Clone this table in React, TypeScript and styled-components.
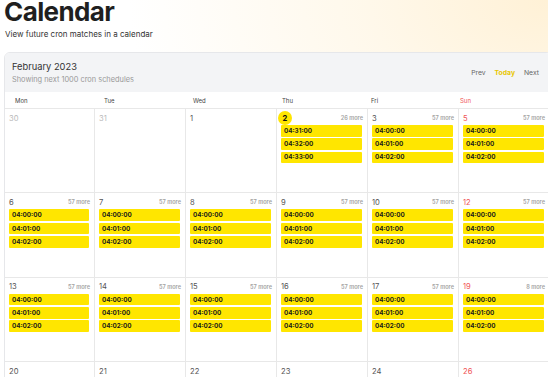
import { FC } from 'react';
import { styled, createGlobalStyle } from 'styled-components';

type CalEvent = string;

type Day = {
  day: number;
  muted?: boolean;
  sunday?: boolean;
  today?: boolean;
  more?: number;
  events?: CalEvent[];
};

const STD = ['04:00:00', '04:01:00', '04:02:00'];

const WEEKDAYS = ['Mon', 'Tue', 'Wed', 'Thu', 'Fri', 'Sun'];

const WEEKS: Day[][] = [
  [
    { day: 30, muted: true },
    { day: 31, muted: true },
    { day: 1 },
    { day: 2, today: true, more: 26, events: ['04:31:00', '04:32:00', '04:33:00'] },
    { day: 3, more: 57, events: STD },
    { day: 5, sunday: true, more: 57, events: STD },
  ],
  [
    { day: 6, more: 57, events: STD },
    { day: 7, more: 57, events: STD },
    { day: 8, more: 57, events: STD },
    { day: 9, more: 57, events: STD },
    { day: 10, more: 57, events: STD },
    { day: 12, sunday: true, more: 57, events: STD },
  ],
  [
    { day: 13, more: 57, events: STD },
    { day: 14, more: 57, events: STD },
    { day: 15, more: 57, events: STD },
    { day: 16, more: 57, events: STD },
    { day: 17, more: 57, events: STD },
    { day: 19, sunday: true, more: 8, events: STD },
  ],
  [
    { day: 20 },
    { day: 21 },
    { day: 22 },
    { day: 23 },
    { day: 24 },
    { day: 26, sunday: true },
  ],
];

const DayCell: FC<{ d: Day }> = ({ d }) => (
  <Cell>
    <CellTop>
      <DayNumber $muted={d.muted} $sunday={d.sunday} $today={d.today}>
        {d.day}
      </DayNumber>
      {d.more ? <MoreLabel>{d.more} more</MoreLabel> : null}
    </CellTop>
    {d.events && (
      <EventList>
        {d.events.map((e) => (
          <EventBar key={e}>{e}</EventBar>
        ))}
      </EventList>
    )}
  </Cell>
);

const App: FC = () => {
  return (
    <>
      <GlobalStyle />
      <Page>
        <Title>Calendar</Title>
        <Subtitle>View future cron matches in a calendar</Subtitle>
        <Card>
          <CardHeader>
            <div>
              <MonthTitle>February 2023</MonthTitle>
              <MonthSub>Showing next 1000 cron schedules</MonthSub>
            </div>
            <Nav>
              <NavLink>Prev</NavLink>
              <NavLink $active>Today</NavLink>
              <NavLink>Next</NavLink>
            </Nav>
          </CardHeader>
          <WeekdayRow>
            {WEEKDAYS.map((w) => (
              <Weekday key={w} $sunday={w === 'Sun'}>
                {w}
              </Weekday>
            ))}
          </WeekdayRow>
          <MonthGrid>
            {WEEKS.flat().map((d, i) => (
              <DayCell key={i} d={d} />
            ))}
          </MonthGrid>
        </Card>
      </Page>
    </>
  );
};

export default App;

const GlobalStyle = createGlobalStyle`
  html, body {
    margin: 0;
    overflow: hidden;
    font-family: Inter, "Noto Sans", sans-serif;
    color: #222;
    background:
      radial-gradient(ellipse 420px 260px at 100% 0%, #fff1d6 0%, rgba(255, 244, 222, 0.6) 45%, rgba(255, 255, 255, 0) 100%),
      #ffffff;
  }
`;

const Page = styled.div`
  padding: 0 0 0 4px;
  width: 560px;
`;

const Title = styled.h1`
  margin: 0;
  font-size: 26px;
  line-height: 24px;
  font-weight: 700;
  letter-spacing: -0.6px;
  color: #1f1f1f;
`;

const Subtitle = styled.p`
  margin: 4px 0 0 1px;
  font-size: 8px;
  line-height: 12px;
  color: #333;
`;

const Card = styled.div`
  margin-top: 12px;
  width: 546px;
  border: 1px solid #e6e7ea;
  border-radius: 6px;
  overflow: hidden;
  background: #fff;
`;

const CardHeader = styled.div`
  height: 39px;
  background: #f3f4f6;
  display: flex;
  align-items: center;
  justify-content: space-between;
  padding: 0 12px 0 7px;
`;

const MonthTitle = styled.div`
  font-size: 9.3px;
  line-height: 12px;
  color: #333;
`;

const MonthSub = styled.div`
  font-size: 7.4px;
  line-height: 10px;
  color: #999;
  margin-top: 2px;
`;

const Nav = styled.div`
  display: flex;
  gap: 9px;
`;

const NavLink = styled.span<{ $active?: boolean }>`
  font-size: 6.8px;
  font-weight: ${(p) => (p.$active ? 700 : 400)};
  color: ${(p) => (p.$active ? '#e8c600' : '#666')};
`;

const WeekdayRow = styled.div`
  display: grid;
  grid-template-columns: repeat(6, 89px);
  padding-left: 10px;
  height: 16px;
  align-items: center;
  border-bottom: 1px solid #e8e8e8;
`;

const Weekday = styled.div<{ $sunday?: boolean }>`
  font-size: 6px;
  color: ${(p) => (p.$sunday ? '#f05454' : '#444')};
`;

const MonthGrid = styled.div`
  display: grid;
  grid-template-columns: 90px repeat(5, 91px);
  grid-auto-rows: 84.4px;
`;

const Cell = styled.div`
  box-sizing: border-box;
  border-right: 1px solid #e8e8e8;
  border-bottom: 1px solid #e8e8e8;
  padding: 2px 4px 0 3px;
`;

const CellTop = styled.div`
  display: flex;
  justify-content: space-between;
  align-items: center;
  height: 14px;
`;

const DayNumber = styled.span<{ $muted?: boolean; $sunday?: boolean; $today?: boolean }>`
  display: inline-flex;
  align-items: center;
  min-width: 14px;
  height: 14px;
  margin-left: ${(p) => (p.$today ? '-2px' : 0)};
  justify-content: ${(p) => (p.$today ? 'center' : 'flex-start')};
  padding-left: ${(p) => (p.$today ? 0 : '1px')};
  border-radius: 50%;
  font-size: 7.6px;
  font-weight: ${(p) => (p.$today ? 700 : 400)};
  background: ${(p) => (p.$today ? '#ffe500' : 'transparent')};
  color: ${(p) => (p.$muted ? '#bbb' : p.$sunday ? '#f05454' : p.$today ? '#111' : '#555')};
`;

const MoreLabel = styled.span`
  font-size: 5.6px;
  font-weight: 600;
  color: #a3a3a3;
`;

const EventList = styled.div`
  display: flex;
  flex-direction: column;
  gap: 1.6px;
  padding: 0 1px 0 1px;
`;

const EventBar = styled.div`
  height: 11.7px;
  background: #ffe600;
  border-radius: 1px;
  padding-left: 3px;
  display: flex;
  align-items: center;
  font-size: 6.3px;
  font-weight: 700;
  color: #1a1a1a;
`;
